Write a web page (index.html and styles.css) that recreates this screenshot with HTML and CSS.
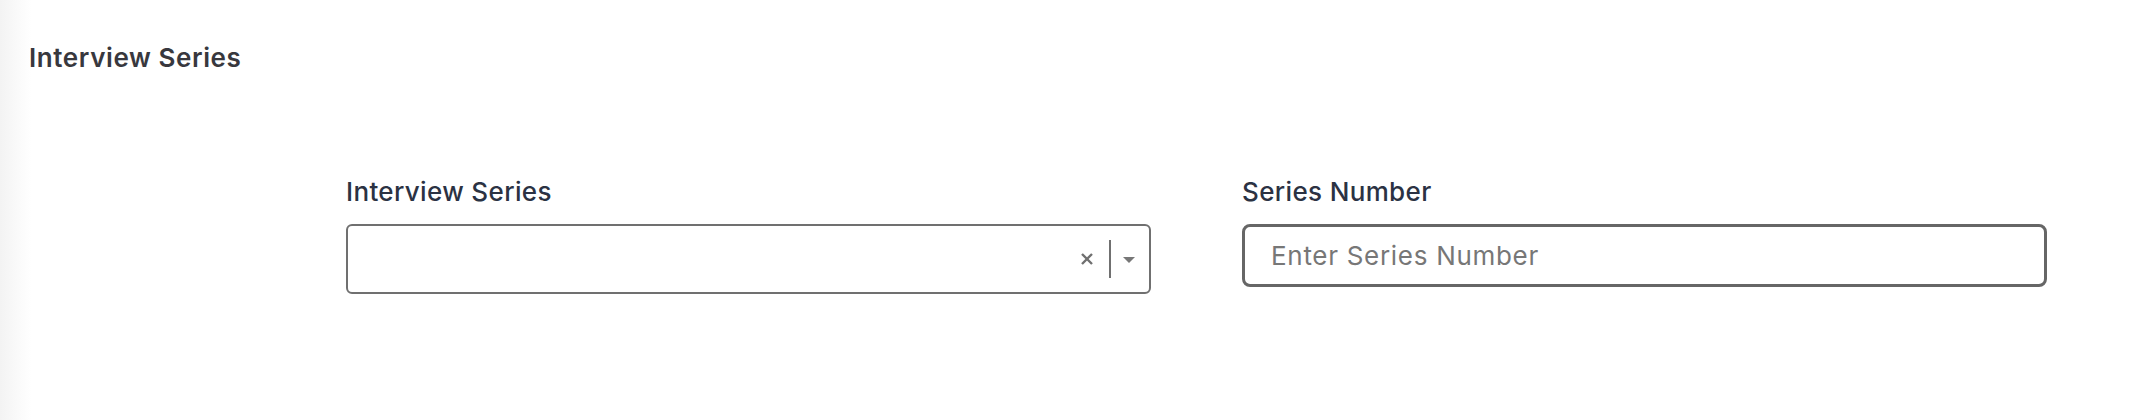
FILE: index.html
```html
<!DOCTYPE html>
<html lang="en">
<head>
<meta charset="utf-8">
<title>Interview Series</title>
<link rel="stylesheet" href="styles.css">
</head>
<body>
<div class="page">
  <h2 class="section-title">Interview Series</h2>
  <div class="fields">
    <div class="field">
      <label class="field-label">Interview Series</label>
      <div class="select">
        <div class="select-value"></div>
        <div class="select-indicators">
          <span class="clear">
            <svg width="14" height="14" viewBox="0 0 14 14"><path d="M2 2 L12 12 M12 2 L2 12" stroke="#707070" stroke-width="2.4" stroke-linecap="butt"/></svg>
          </span>
          <span class="sep"></span>
          <span class="arrow">
            <svg width="12" height="6" viewBox="0 0 12 6"><path d="M0 0 H12 L6 6 Z" fill="#777"/></svg>
          </span>
        </div>
      </div>
    </div>
    <div class="field">
      <label class="field-label">Series Number</label>
      <input class="text-input" type="text" placeholder="Enter Series Number">
    </div>
  </div>
</div>
</body>
</html>
```
FILE: styles.css
```css
html, body {
  margin: 0;
  padding: 0;
  background: #fff;
}
body {
  width: 2140px;
  height: 420px;
  font-family: Inter, "Open Sans", sans-serif;
  background: linear-gradient(to right, #f3f3f3 0px, #fafafa 18px, #fff 32px);
}
.page {
  padding: 0 93px 0 29px;
}
.section-title {
  margin: 0;
  padding-top: 45px;
  font-size: 26px;
  line-height: 26px;
  font-weight: 600;
  letter-spacing: 0.6px;
  color: #38383e;
}
.fields {
  display: flex;
  gap: 91px;
  padding-left: 317px;
  padding-top: 108px;
}
.field {
  flex: 1;
  display: flex;
  flex-direction: column;
}
.field-label {
  font-size: 26px;
  line-height: 26px;
  font-weight: 500;
  letter-spacing: 0.35px;
  color: #2b3243;
  margin-bottom: 19px;
}
.select {
  box-sizing: border-box;
  height: 70px;
  border: 2px solid #707070;
  border-radius: 6px;
  display: flex;
  align-items: center;
}
.select-value {
  flex: 1;
}
.select-indicators {
  display: flex;
  align-items: center;
  padding-right: 14px;
}
.clear {
  display: flex;
  width: 14px;
  height: 14px;
}
.sep {
  width: 2px;
  height: 38px;
  background: #707070;
  margin: 0 12px 0 15px;
}
.arrow {
  display: flex;
  margin-top: 2px;
}
.text-input {
  box-sizing: border-box;
  height: 63px;
  border: 3px solid #666;
  border-radius: 8px;
  padding: 0 0 0 26px;
  font-family: Inter, "Open Sans", sans-serif;
  font-size: 26px;
  letter-spacing: 0.7px;
  color: #333;
  outline: none;
  width: 100%;
}
.text-input::placeholder {
  color: #777;
}
```
